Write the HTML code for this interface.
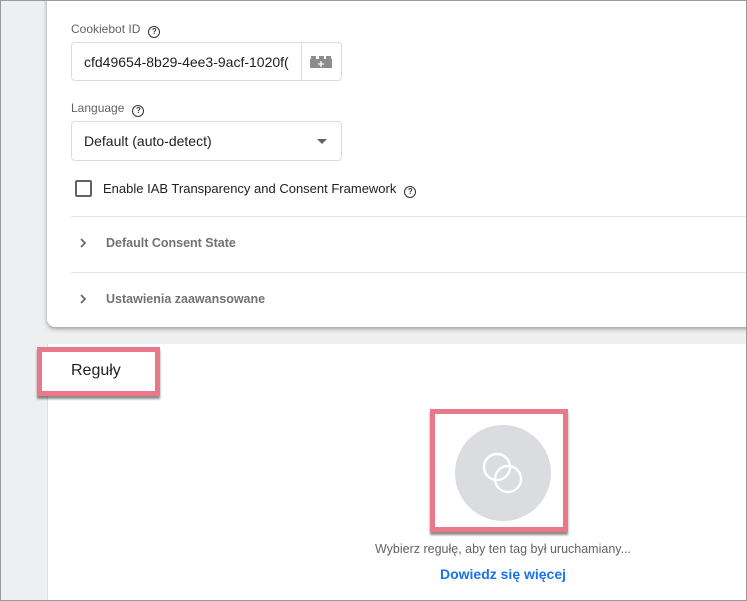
<!DOCTYPE html>
<html><head><meta charset="utf-8"><style>
*{box-sizing:border-box;margin:0;padding:0}
body{width:747px;height:601px;overflow:hidden;background:#eeeff0;font-family:"Liberation Sans",sans-serif;position:relative}
.frame{position:absolute;left:0;top:0;width:747px;height:601px;border:1px solid #9a9a9a;z-index:10;pointer-events:none}
.card{position:absolute;left:47px;top:-10px;width:710px;height:337px;background:#fff;border-radius:8px;box-shadow:0 2px 4px rgba(0,0,0,.35)}
.lbl{position:absolute;left:71px;font-size:12px;color:#5f6368}
.q{display:inline-block;width:12px;height:12px;border:1.3px solid #333;border-radius:50%;font-size:8px;text-align:center;line-height:10px;color:#333;margin-left:8px;vertical-align:-1px;font-weight:bold}
.box{position:absolute;left:71px;width:271px;border:1px solid #dadce0;border-radius:4px;font-size:14px;color:#202124}
.div{position:absolute;left:71px;right:0;height:1px;background:#e3e3e3}
.acc{position:absolute;left:106px;font-size:12.5px;color:#6f7276;font-weight:bold}
.chev{position:absolute;left:79px}
.panel{position:absolute;left:47px;top:344px;right:0;bottom:0;background:#fff;border-left:1px solid #e0e0e0}
.pink{position:absolute;border:5px solid #e8788a;box-shadow:0 3px 2px rgba(0,0,0,.45);background:#fff}
</style></head><body>
<div class="frame"></div>
<div class="card"></div>
<div class="lbl" style="top:22px">Cookiebot ID<span class="q">?</span></div>
<div class="box" style="top:42px;height:39px;padding:11px 0 0 12px">cfd49654-8b29-4ee3-9acf-1020f(
 <div style="position:absolute;left:229px;top:0;bottom:0;width:1px;background:#dadce0"></div>
 <svg style="position:absolute;left:237px;top:13px" width="24" height="12"><rect x="1" y="3" width="22" height="9" fill="#8c8c8c"/><rect x="2" y="0" width="5" height="4" fill="#8c8c8c"/><rect x="10" y="0" width="5" height="4" fill="#8c8c8c"/><rect x="17" y="0" width="5" height="4" fill="#8c8c8c"/><path d="M12 5v6M9 8h6" stroke="#fff" stroke-width="1.3"/></svg>
</div>
<div class="lbl" style="top:101px">Language<span class="q">?</span></div>
<div class="box" style="top:121px;height:40px;padding:11px 0 0 12px">Default (auto-detect)
 <div style="position:absolute;right:14px;top:17px;border-left:5px solid transparent;border-right:5px solid transparent;border-top:5px solid #5f6368"></div></div>
<div style="position:absolute;left:75px;top:180px;width:17px;height:17px;border:2px solid #5f6368;border-radius:2px"></div>
<div style="position:absolute;left:103px;top:181px;font-size:13px;color:#202124">Enable IAB Transparency and Consent Framework<span class="q">?</span></div>
<div class="div" style="top:216px"></div>
<svg class="chev" style="top:237px" width="8" height="12"><path d="M2 2l4 4-4 4" fill="none" stroke="#5f6368" stroke-width="1.6"/></svg>
<div class="acc" style="top:236px">Default Consent State</div>
<div class="div" style="top:272px"></div>
<svg class="chev" style="top:293px" width="8" height="12"><path d="M2 2l4 4-4 4" fill="none" stroke="#5f6368" stroke-width="1.6"/></svg>
<div class="acc" style="top:292px">Ustawienia zaawansowane</div>
<div class="panel"></div>
<div class="pink" style="left:37px;top:347px;width:123px;height:49px;padding:10px 0 0 29px;font-size:16px;color:#202124">Reguły</div>
<div class="pink" style="left:430px;top:409px;width:138px;height:123px">
 <div style="position:absolute;left:20px;top:11px;width:96px;height:96px;border-radius:50%;background:#dadce0"></div>
 <svg style="position:absolute;left:45px;top:36px" width="46" height="46"><circle cx="17" cy="17" r="13" fill="none" stroke="#fff" stroke-width="2.4"/><circle cx="28" cy="29" r="13" fill="none" stroke="#fff" stroke-width="2.4"/></svg>
</div>
<div style="position:absolute;left:303px;width:400px;top:542px;text-align:center;font-size:12.5px;color:#5f6368">Wybierz regułę, aby ten tag był uruchamiany...</div>
<div style="position:absolute;left:303px;width:400px;top:566px;text-align:center;font-size:14px;color:#1a73e8;font-weight:bold">Dowiedz się więcej</div>
</body></html>
